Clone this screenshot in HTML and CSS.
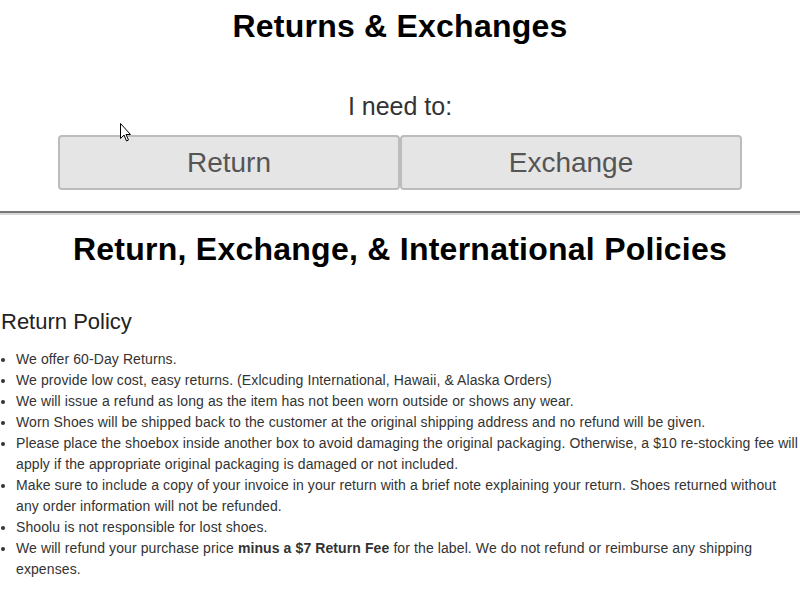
FILE: index.html
```html
<!DOCTYPE html>
<html>
<head>
<meta charset="utf-8">
<title>Returns &amp; Exchanges</title>
<link rel="stylesheet" href="styles.css">
</head>
<body>
<section class="top">
  <h1 class="title">Returns &amp; Exchanges</h1>
  <p class="need">I need to:</p>
  <div class="choices">
    <button class="choice">Return</button>
    <button class="choice">Exchange</button>
  </div>
  <svg class="cursor" width="12" height="20" viewBox="0 0 12 20"><path d="M0.5 0.5 L0.5 15.5 L4 12 L6.5 18 L8.5 17 L6 11.5 L10.5 11.5 Z" fill="#fff" stroke="#000" stroke-width="1"/></svg>
</section>
<hr class="divider">
<section class="policies">
  <h1 class="title">Return, Exchange, &amp; International Policies</h1>
  <h2 class="sub">Return Policy</h2>
  <ul class="list">
    <li>We offer 60-Day Returns.</li>
    <li>We provide low cost, easy returns. (Exlcuding International, Hawaii, &amp; Alaska Orders)</li>
    <li>We will issue a refund as long as the item has not been worn outside or shows any wear.</li>
    <li>Worn Shoes will be shipped back to the customer at the original shipping address and no refund will be given.</li>
    <li>Please place the shoebox inside another box to avoid damaging the original packaging. Otherwise, a $10 re-stocking fee will apply if the appropriate original packaging is damaged or not included.</li>
    <li>Make sure to include a copy of your invoice in your return with a brief note explaining your return. Shoes returned without any order information will not be refunded.</li>
    <li>Shoolu is not responsible for lost shoes.</li>
    <li>We will refund your purchase price <b>minus a $7 Return Fee</b> for the label. We do not refund or reimburse any shipping expenses.</li>
  </ul>
</section>
</body>
</html>
```

FILE: styles.css
```css
html, body {
  margin: 0;
  padding: 0;
  background: #fff;
}
body {
  font-family: "Liberation Sans", Arial, sans-serif;
  color: #333;
}
.top {
  position: relative;
  padding-top: 8px;
  padding-bottom: 21px;
}
.title {
  margin: 0;
  font-size: 32px;
  line-height: 37px;
  font-weight: bold;
  color: #000;
  text-align: center;
  letter-spacing: 0.22px;
}
.need {
  margin: 47px 0 0;
  font-size: 25px;
  line-height: 28px;
  text-align: center;
  color: #333;
}
.choices {
  display: flex;
  margin: 15px 58px 0;
}
.choice {
  flex: 1;
  height: 55px;
  margin: 0;
  padding: 0;
  background: #e5e5e5;
  border: 2px solid #bcbcbc;
  border-radius: 4px;
  font-family: "Liberation Sans", Arial, sans-serif;
  font-size: 28px;
  color: #555;
}
.cursor {
  position: absolute;
  left: 120px;
  top: 123px;
}
.divider {
  margin: 0;
  height: 0;
  border: 0;
  border-top: 2px solid #777;
  border-bottom: 2px solid #d6d6d6;
}
.policies .title {
  margin-top: 16px;
  letter-spacing: 0.25px;
}
.sub {
  margin: 41px 0 0;
  font-size: 22px;
  line-height: 25px;
  font-weight: normal;
  color: #222;
  padding-left: 1px;
}
.list {
  margin: 15px 0 0;
  padding: 0 0 0 16px;
  font-size: 14px;
  line-height: 21px;
  color: #333;
  letter-spacing: 0.1px;
}
.list b {
  color: #333;
}
```
